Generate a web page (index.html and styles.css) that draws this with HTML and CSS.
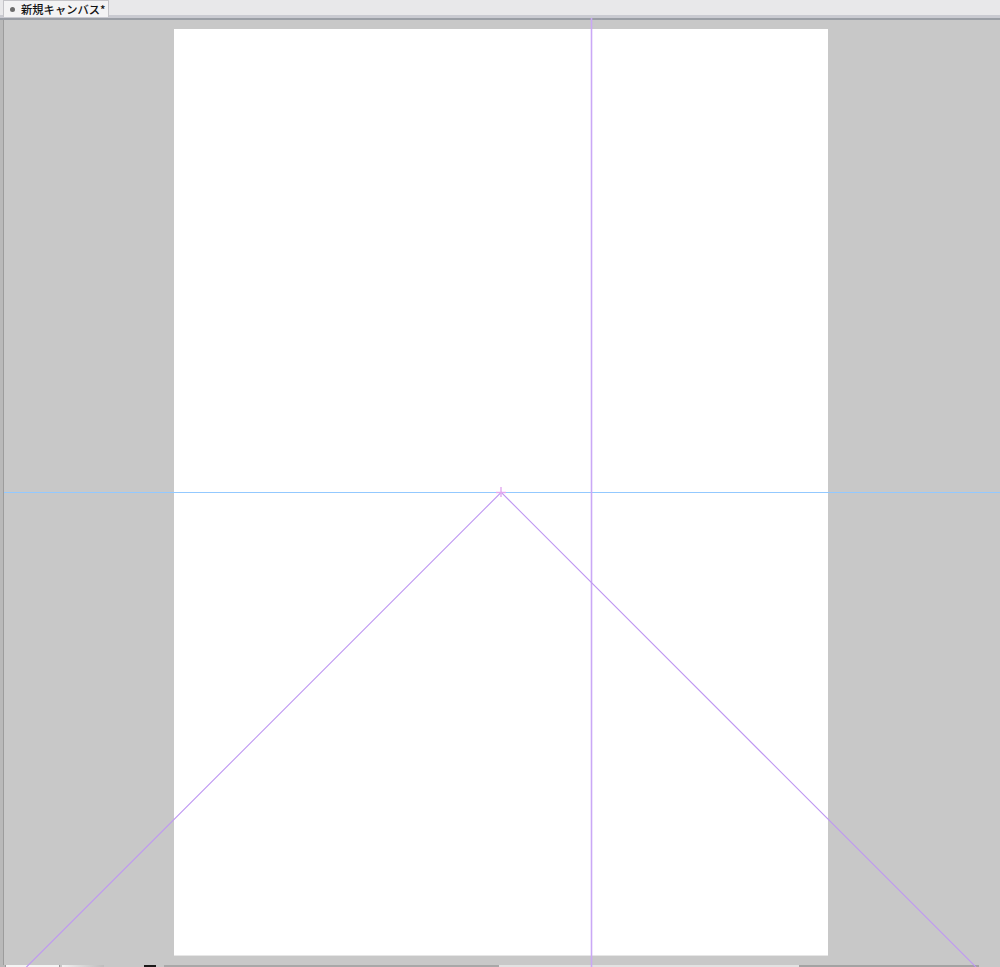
FILE: index.html
```html
<!DOCTYPE html>
<html lang="ja">
<head>
<meta charset="utf-8">
<title>新規キャンバス</title>
<link rel="stylesheet" href="styles.css">
</head>
<body>
<div class="app">
  <div class="tabbar">
    <div class="tab"><span class="dot"></span><span class="tab-label">新規キャンバス*</span></div>
  </div>
  <div class="workspace">
    <div class="left-edge"></div>
    <div class="canvas-area">
      <div class="page"></div>
    </div>
  </div>
  <div class="bottombar">
    <span class="seg seg-a"></span>
    <span class="seg seg-b"></span>
    <span class="seg seg-c"></span>
    <span class="seg seg-d"></span>
    <span class="seg seg-e"></span>
    <span class="seg seg-f"></span>
    <span class="seg seg-g"></span>
    <span class="seg seg-h"></span>
  </div>
  <svg class="guides" viewBox="0 0 1000 967" width="1000" height="967">
    <line x1="4" y1="492.5" x2="1000" y2="492.5" stroke="#93c9ff" stroke-width="1.2"/>
    <line x1="591.5" y1="18" x2="591.5" y2="967" stroke="#caa8f6" stroke-width="1.6"/>
    <path d="M26.3 967.2 L501.2 492.3 L976.1 967.2" fill="none" stroke="#bf98f2" stroke-width="1.1" shape-rendering="geometricPrecision"/>
    <line x1="501" y1="487" x2="501" y2="497" stroke="#e2a8f0" stroke-width="1.4"/>
    <line x1="496" y1="492.5" x2="506" y2="492.5" stroke="#e2a8f0" stroke-width="1.4"/>
  </svg>
</div>
</body>
</html>
```
FILE: styles.css
```css
html, body {
  margin: 0;
  padding: 0;
  width: 1000px;
  height: 967px;
  overflow: hidden;
  background: #c8c8c8;
  font-family: "Noto Sans CJK JP", "Noto Sans", sans-serif;
}

.app {
  position: relative;
  width: 1000px;
  height: 967px;
  display: flex;
  flex-direction: column;
  overflow: hidden;
}

.tabbar {
  height: 15px;
  flex: none;
  background: #e8e8ea;
  display: flex;
  align-items: flex-end;
  padding-left: 3px;
  border-bottom: 3px solid #c9cad1;
  box-shadow: 0 2px 0 #9a9ea5;
  margin-bottom: 2px;
}

.tab {
  width: 106px;
  height: 17px;
  background: #f3f3f4;
  border: 1px solid #c4c4c8;
  border-bottom: none;
  box-sizing: border-box;
  display: flex;
  align-items: center;
  padding-left: 6px;
  margin-bottom: -2px;
}

.dot {
  width: 5px;
  height: 5px;
  border-radius: 50%;
  background: #6c6c6c;
  margin-right: 6px;
}

.tab-label {
  font-size: 11.3px;
  line-height: 13px;
  color: #111;
  font-weight: 500;
}

.workspace {
  flex: 1;
  display: flex;
  min-height: 0;
}

.left-edge {
  width: 3px;
  flex: none;
  background: #b9b9b9;
  border-right: 1px solid #9c9c9c;
}

.canvas-area {
  flex: 1;
  background: #c8c8c8;
  padding: 9px 0 0 170px;
  box-sizing: border-box;
}

.page {
  width: 654px;
  height: 926px;
  background: #ffffff;
  border-bottom: 1px solid #e6e6e6;
}

.bottombar {
  height: 2px;
  flex: none;
  display: flex;
  background: #c8c8c8;
}

.seg { height: 2px; display: block; }
.seg-a { width: 5px; background: #b9b9b9; }
.seg-b { width: 53px; background: #f4f4f4; border-left: 1px solid #999; border-right: 1px solid #999; }
.seg-c { width: 42px; background: linear-gradient(90deg, #f2f2f2, #bdbdbd); margin-left: 2px; }
.seg-d { width: 40px; background: #c8c8c8; }
.seg-e { width: 12px; background: #1a1a1a; }
.seg-f { width: 335px; background: #a8a8a8; margin-left: 8px; }
.seg-g { width: 300px; background: #e2e2e2; }
.seg-h { width: 180px; background: #a3a3a3; }

.guides {
  position: absolute;
  left: 0;
  top: 0;
  pointer-events: none;
}
```
